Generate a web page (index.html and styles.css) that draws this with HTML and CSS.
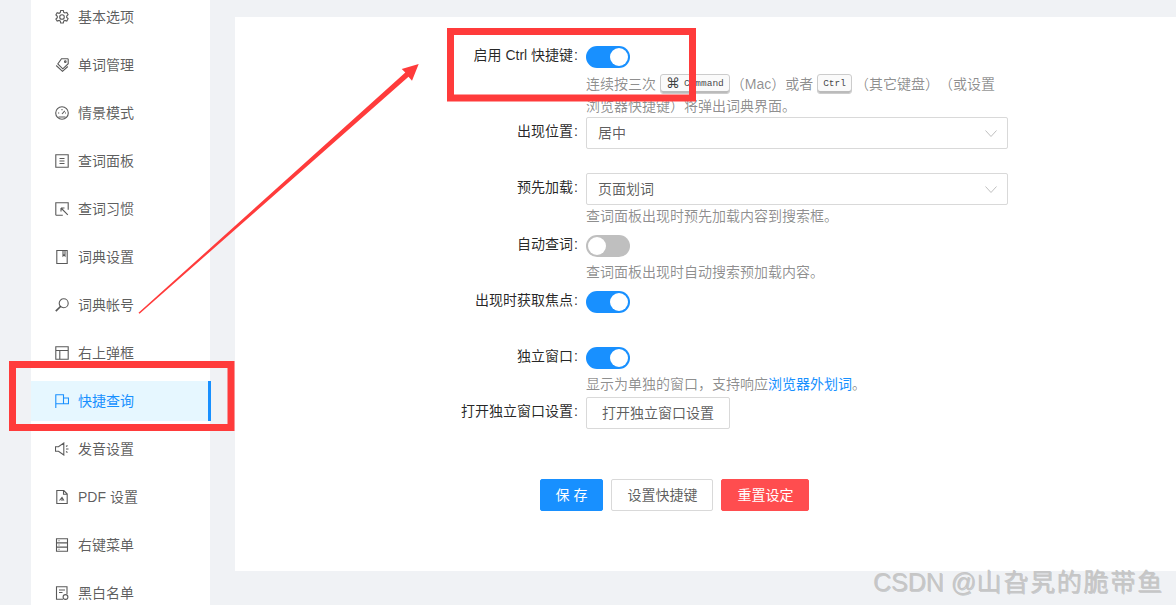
FILE: index.html
```html
<!DOCTYPE html>
<html lang="zh-CN">
<head>
<meta charset="utf-8">
<title>快捷查询</title>
<link rel="stylesheet" href="styles.css">
</head>
<body>
<div class="page">
  <nav class="sidebar">
    <a class="item"><svg class="ico" viewBox="0 0 14 14"><path d="M5.700.4h2.600l.4 1.900 1.200.7 1.900-.6 1.300 2.300-1.400 1.300v1.400l1.400 1.300-1.300 2.300-1.900-.6-1.200.7-.4 1.900H5.700l-.4-1.900-1.200-.7-1.900.6L.900 9l1.400-1.300V6.300L.900 5l1.300-2.300 1.900.6 1.200-.7z"/><circle cx="7" cy="7" r="2.300"/></svg><span>基本选项</span></a>
    <a class="item"><svg class="ico" viewBox="0 0 14 14"><path d="M6.500.8h6.300l.4.400v4.500L7.800 10.800 2.800 6zM1.200 7.500L7.500 13.300 12.800 8.500"/><circle cx="10.300" cy="3.700" r=".8"/></svg><span>单词管理</span></a>
    <a class="item"><svg class="ico" viewBox="0 0 14 14"><circle cx="7" cy="7" r="6.300"/><path d="M7 8l2.800-3.200M3 7h1.200M7 3v1.200M10 7h1M3.500 11h7"/></svg><span>情景模式</span></a>
    <a class="item"><svg class="ico" viewBox="0 0 14 14"><path d="M.8.800h12.400v12.400H.8zM4.500 4.500h5M4.500 7h5M4.500 9.500h5"/></svg><span>查词面板</span></a>
    <a class="item"><svg class="ico" viewBox="0 0 14 14"><path d="M.8 13.200V.8h12.400v7M.8 13.200h7M6 6l6.800 6.800M6 6h3.500M6 6v3.500"/></svg><span>查词习惯</span></a>
    <a class="item"><svg class="ico" viewBox="0 0 14 14"><path d="M1.800.5h10.400v13H1.800zM8 .8v5.200l1-1 1 1V.8"/></svg><span>词典设置</span></a>
    <a class="item"><svg class="ico" viewBox="0 0 14 14"><circle cx="8.700" cy="5.300" r="4.500"/><path d="M5.500 8.500L.8 13.200" stroke-width="1.700"/></svg><span>词典帐号</span></a>
    <a class="item"><svg class="ico" viewBox="0 0 14 14"><path d="M.8.800h12.400v12.400H.8zM.8 4.500h12.400M4.800 4.500v8.700"/></svg><span>右上弹框</span></a>
    <a class="item is-active"><svg class="ico" viewBox="0 0 14 14"><path d="M.8 14V.8h7.700v9H.8M8.500 4h5v5.800h-5"/></svg><span>快捷查询</span></a>
    <a class="item"><svg class="ico" viewBox="0 0 14 14"><path d="M.5 4.800h3L8.800 1v12L3.500 9.200h-3zM11 4.500l1.500-1M11 7h2.500M11 9.500l1.500 1"/></svg><span>发音设置</span></a>
    <a class="item"><svg class="ico" viewBox="0 0 14 14"><path d="M1.800.5h7l3.400 3.500v9.500H1.800zM8.500.8v3.500h3.700M4.500 10.500L7 7.500l1.500 2.500H6"/></svg><span>PDF 设置</span></a>
    <a class="item"><svg class="ico" viewBox="0 0 14 14"><path d="M1.500.8h11v12.400h-11zM1.500 4.900h11M1.500 9.100h11M3.500 2.800h1M3.500 7h1M3.500 11.200h1"/></svg><span>右键菜单</span></a>
    <a class="item"><svg class="ico" viewBox="0 0 14 14"><path d="M8 13.300H1.500V.7h10.500v7.300M4 4h6M4 6.500h3.500"/><circle cx="10.500" cy="11" r="2.400"/></svg><span>黑白名单</span></a>
  </nav>

  <main class="panel">
    <form class="form">
      <div class="row row-tight">
        <div class="label">启用 Ctrl 快捷键</div>
        <div class="control"><span class="switch on"></span></div>
      </div>
      <p class="help help-two">连续按三次 <kbd class="kbd-cmd"><span class="cmd">⌘</span>Command</kbd>（Mac）或者 <kbd class="kbd-ctrl">Ctrl</kbd>（其它键盘）（或设置<br>浏览器快捷键）将弹出词典界面。</p>

      <div class="row">
        <div class="label">出现位置</div>
        <div class="select"><span>居中</span><svg class="chev" viewBox="0 0 12 7"><path d="M.5.5L6 6.500 11.500.5"/></svg></div>
      </div>

      <div class="row row-tight">
        <div class="label">预先加载</div>
        <div class="select"><span>页面划词</span><svg class="chev" viewBox="0 0 12 7"><path d="M.5.5L6 6.500 11.500.5"/></svg></div>
      </div>
      <p class="help gap3">查词面板出现时预先加载内容到搜索框。</p>

      <div class="row row-tight">
        <div class="label">自动查词</div>
        <div class="control"><span class="switch"></span></div>
      </div>
      <p class="help gap2">查词面板出现时自动搜索预加载内容。</p>

      <div class="row">
        <div class="label">出现时获取焦点</div>
        <div class="control"><span class="switch on"></span></div>
      </div>

      <div class="row row-tight">
        <div class="label">独立窗口</div>
        <div class="control"><span class="switch on"></span></div>
      </div>
      <p class="help gap1">显示为单独的窗口，支持响应<a class="link">浏览器外划词</a>。</p>

      <div class="row row-last">
        <div class="label">打开独立窗口设置</div>
        <div class="control"><button type="button" class="btn">打开独立窗口设置</button></div>
      </div>

      <div class="actions">
        <button type="button" class="btn btn-primary">保 存</button>
        <button type="button" class="btn">设置快捷键</button>
        <button type="button" class="btn btn-danger">重置设定</button>
      </div>
    </form>
  </main>

  <svg class="annot" viewBox="0 0 1176 605" aria-hidden="true">
    <rect x="450.500" y="31.500" width="242" height="66.500" class="box"/>
    <rect x="12.500" y="364.500" width="218.500" height="63" class="box"/>
    <polygon class="arrow" points="138.500,312.800 405.300,72.600 401.700,69 418.700,64 412,80.700 408.500,76.800 139.500,313.800"/>
  </svg>
  <div class="watermark">CSDN @<span class="wm-cjk">山旮旯的脆带鱼</span></div>
</div>
</body>
</html>
```

FILE: styles.css
```css
* { box-sizing: border-box; }
html, body { margin: 0; padding: 0; }
body {
  font-family: "Liberation Sans", "Noto Sans CJK SC", sans-serif;
  font-size: 14px;
  color: rgba(0, 0, 0, .65);
  background: #f0f2f5;
  text-spacing-trim: space-all;
}
.page {
  position: relative;
  display: flex;
  align-items: flex-start;
  width: 1176px;
  height: 605px;
  overflow: hidden;
}
.sidebar {
  flex: none;
  width: 179px;
  height: 620px;
  margin: -3px 25px 0 31px;
  background: #fff;
}
.item {
  position: relative;
  display: flex;
  align-items: center;
  gap: 9px;
  height: 40px;
  margin-bottom: 8px;
  padding-left: 24px;
  color: rgba(0, 0, 0, .65);
}
.item span { padding-bottom: 2px; }
.item.is-active { color: #1890ff; background: #e6f7ff; }
.item.is-active::after {
  content: "";
  position: absolute;
  top: 0;
  right: -1px;
  bottom: 0;
  width: 3px;
  background: #1890ff;
}
.ico {
  flex: none;
  width: 14px;
  height: 14px;
  fill: none;
  stroke: currentColor;
  stroke-width: 1.1;
}
.panel {
  flex: 1;
  height: 554px;
  margin-top: 17px;
  background: #fff;
}
.form {
  width: 667px;
  margin-left: 106px;
  padding-top: 24px;
}
.row {
  display: grid;
  grid-template-columns: 245px 422px;
  margin-bottom: 24px;
}
.row-tight { margin-bottom: 0; }
.row-last { margin-bottom: 50px; }
.label {
  color: rgba(0, 0, 0, .85);
  text-align: right;
  line-height: 28px;
  white-space: nowrap;
}
.label::after {
  content: ":";
  margin: 0 8px 0 1px;
}
.control {
  display: flex;
  align-items: center;
  height: 32px;
}
.switch {
  position: relative;
  display: block;
  width: 44px;
  height: 22px;
  border-radius: 11px;
  background: #bfbfbf;
}
.switch::after {
  content: "";
  position: absolute;
  top: 2px;
  left: 2px;
  width: 18px;
  height: 18px;
  border-radius: 50%;
  background: #fff;
}
.switch.on { background: #1890ff; }
.switch.on::after { left: 24px; }
.help {
  width: 422px;
  margin: 0 0 0 245px;
  line-height: 22px;
  color: rgba(0, 0, 0, .45);
}
.help-two { height: 44px; white-space: nowrap; }
.gap3 { margin-bottom: 3px; }
.gap2 { margin-top: -1px; margin-bottom: 3px; }
.gap1 { margin-top: -1px; margin-bottom: 2px; }
.link { color: #1890ff; }
kbd {
  display: inline-block;
  height: 20px;
  margin-top: 1px;
  padding: 0 5px;
  font: 9.500px/17px "Liberation Mono", monospace;
  color: rgba(0, 0, 0, .75);
  vertical-align: top;
  background: #fafafa;
  border: 1px solid #ccc;
  border-radius: 3px;
  box-shadow: inset 0 -2px 0 #bbb;
}
.kbd-cmd { margin-right: 1px; }
.kbd-ctrl { margin-right: 3px; }
.cmd {
  display: inline-block;
  width: 18px;
  font: 14px/17px "DejaVu Sans", sans-serif;
  vertical-align: top;
}
.select {
  display: flex;
  align-items: center;
  justify-content: space-between;
  height: 32px;
  padding: 0 10px 0 11px;
  color: rgba(0, 0, 0, .65);
  background: #fff;
  border: 1px solid #d9d9d9;
  border-radius: 2px;
}
.select span { padding-bottom: 2px; }
.chev {
  width: 12px;
  height: 7px;
  fill: none;
  stroke: #bfbfbf;
}
.btn {
  height: 32px;
  padding: 0 15px 2px;
  font: inherit;
  color: rgba(0, 0, 0, .65);
  background: #fff;
  border: 1px solid #d9d9d9;
  border-radius: 2px;
}
.btn-primary { color: #fff; background: #1890ff; border-color: #1890ff; }
.btn-danger { color: #fff; background: #ff4d4f; border-color: #ff4d4f; }
.actions {
  display: flex;
  justify-content: center;
  gap: 8px;
}
.annot {
  position: absolute;
  top: 0;
  left: 0;
  width: 1176px;
  height: 605px;
  pointer-events: none;
}
.box { fill: none; stroke: #ff3b3b; stroke-width: 7; }
.arrow { fill: #ff3b3b; }
.watermark {
  position: absolute;
  top: 564px;
  left: 873px;
  font-size: 25px;
  line-height: 36px;
  color: #c6c6c6;
  text-shadow: 1px 1px 0 rgba(0, 0, 0, .18);
  white-space: nowrap;
}
.wm-cjk { letter-spacing: 1.800px; }
```
